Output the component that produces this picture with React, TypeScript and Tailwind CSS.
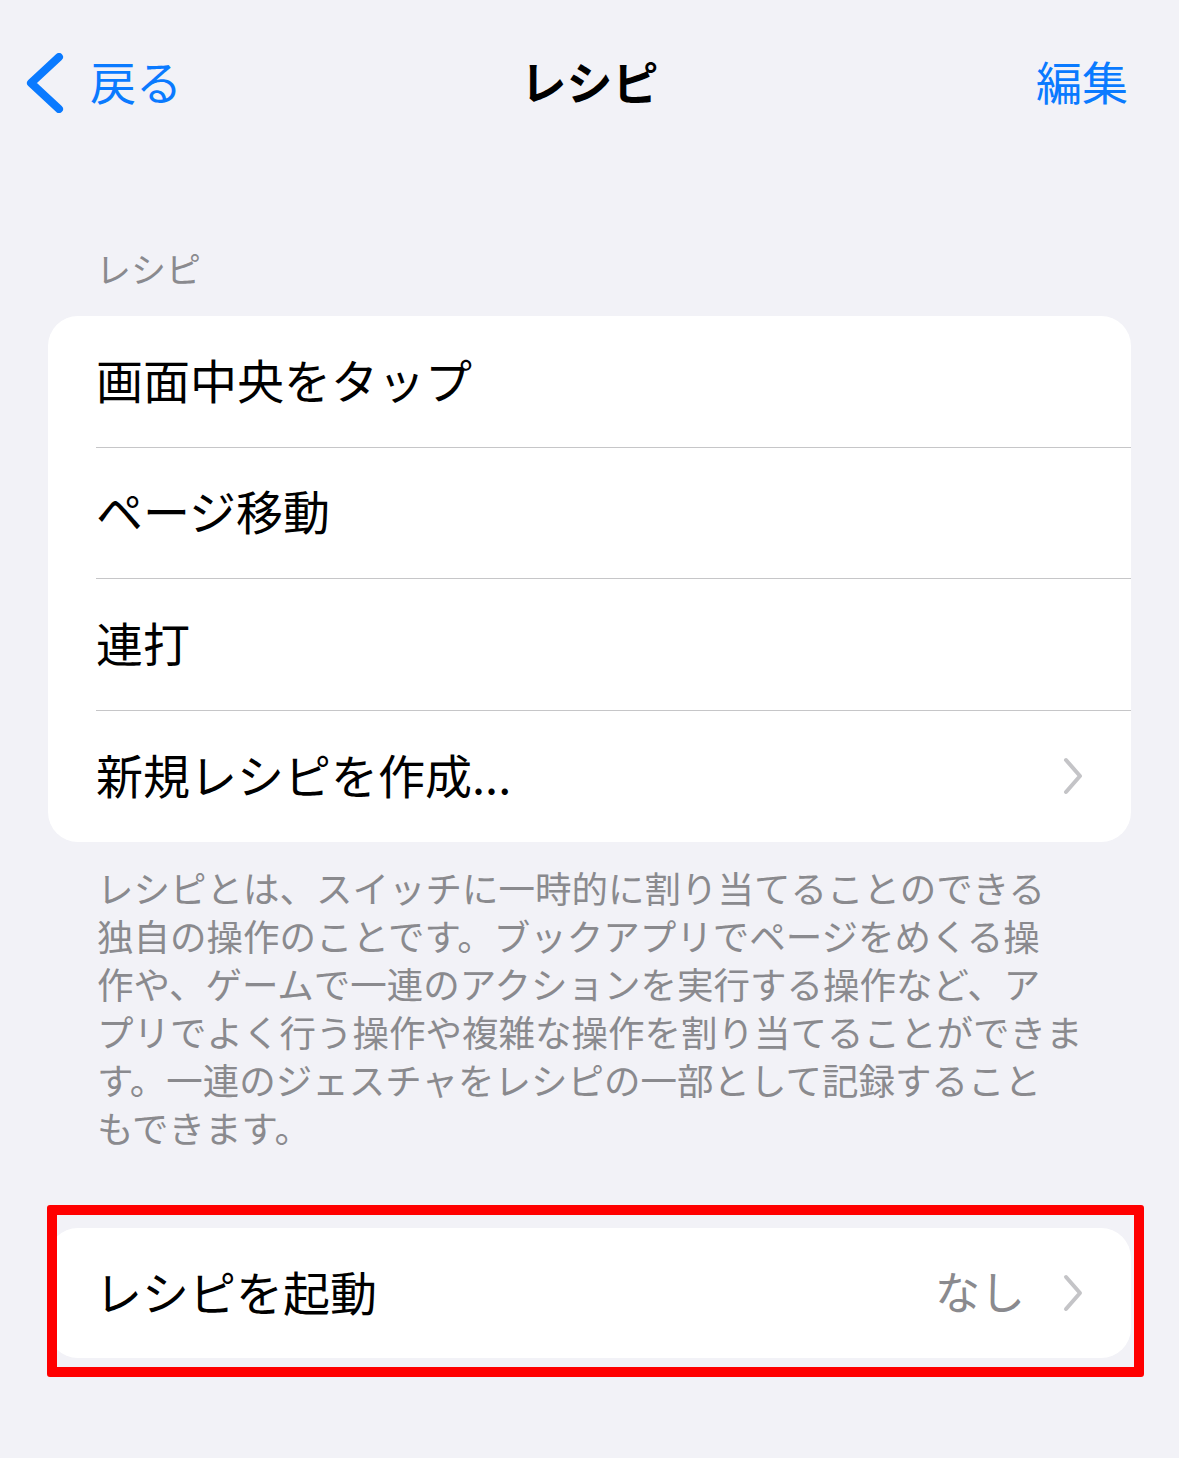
const jp = "font-['Noto_Sans_CJK_JP','Noto_Sans',sans-serif]";

function Chevron() {
  return (
    <svg width="20" height="38" viewBox="0 0 20 38" className="shrink-0">
      <path
        d="M3 3 L17 19 L3 35"
        fill="none"
        stroke="#c4c4c7"
        strokeWidth="4"
        strokeLinecap="round"
        strokeLinejoin="round"
      />
    </svg>
  );
}

const rows = ["画面中央をタップ", "ページ移動", "連打", "新規レシピを作成..."];

export default function App() {
  return (
    <div className={`w-full min-h-[1458px] bg-[#f2f2f7] ${jp}`}>
      {/* ナビゲーションバー */}
      <div className="grid grid-cols-[1fr_auto_1fr] items-center h-[160px] px-[26px]">
        <div className="flex items-center gap-[22px] text-[#0a7aff]">
          <svg width="42" height="60" viewBox="0 0 42 60" className="mt-[6px]">
            <path
              d="M33 4 L5 30 L33 56"
              fill="none"
              stroke="#0a7aff"
              strokeWidth="8"
              strokeLinecap="round"
              strokeLinejoin="round"
            />
          </svg>
          <span className="text-[46px] leading-none">戻る</span>
        </div>
        <div className="text-[46px] font-bold leading-none text-black">レシピ</div>
        <div className="text-right text-[46px] leading-none text-[#0a7aff] pr-[25px]">編集</div>
      </div>

      {/* セクション見出し */}
      <div className="mt-[88px] mb-[28px] pl-[96px] text-[35px] leading-[40px] text-[#8a8a8e]">
        レシピ
      </div>

      {/* リスト */}
      <div className="mx-[48px] bg-white rounded-[30px] overflow-hidden">
        {rows.map((r, i) => (
          <div key={r} className="pl-[48px] h-[131.5px]">
            <div
              className={`h-full flex items-center justify-between pr-[48px] ${
                i < rows.length - 1 ? "border-b border-[#c6c6c8]" : ""
              }`}
            >
              <span className="text-[47px] leading-none text-black mb-[6px]">{r}</span>
              {i === rows.length - 1 && <Chevron />}
            </div>
          </div>
        ))}
      </div>

      {/* 説明 */}
      <p className="mt-[22px] pl-[97px] text-[36.5px] leading-[48px] text-[#8a8a8e] whitespace-nowrap">
        レシピとは、スイッチに一時的に割り当てることのできる
        <br />
        独自の操作のことです。ブックアプリでページをめくる操
        <br />
        作や、ゲームで一連のアクションを実行する操作など、ア
        <br />
        プリでよく行う操作や複雑な操作を割り当てることができま
        <br />
        す。一連のジェスチャをレシピの一部として記録すること
        <br />
        もできます。
      </p>

      {/* レシピを起動 */}
      <div className="relative mx-[48px] mt-[76px]">
        <div className="bg-white rounded-[30px] h-[130px] flex items-center justify-between pl-[47px] pr-[48px]">
          <span className="text-[47px] leading-none text-black mb-[6px]">レシピを起動</span>
          <div className="flex items-center gap-[38px]">
            <span className="text-[45px] leading-none text-[#8a8a8e] mb-[6px]">なし</span>
            <Chevron />
          </div>
        </div>
        <div className="absolute -top-[23px] -bottom-[19px] -left-[1px] -right-[13px] border-[10px] border-[#ff0000] rounded-[3px] pointer-events-none" />
      </div>
    </div>
  );
}
